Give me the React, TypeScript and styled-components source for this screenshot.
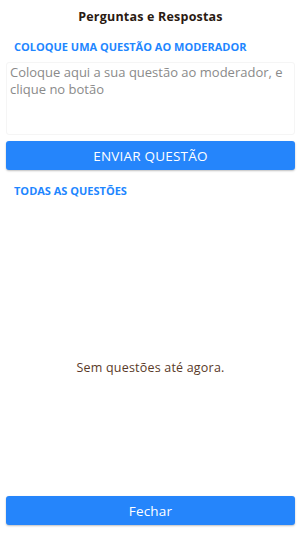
import React from 'react'
import styled, { createGlobalStyle } from 'styled-components'

const GlobalStyle = createGlobalStyle`
  html, body {
    margin: 0;
    padding: 0;
    background: #ffffff;
  }
  body {
    font-family: 'Open Sans', 'Noto Sans', sans-serif;
  }
`

export default function App(): React.ReactElement {
  return (
    <>
      <GlobalStyle />
      <Wrapper>
        <Title>Perguntas e Respostas</Title>
        <SectionLabel>COLOQUE UMA QUESTÃO AO MODERADOR</SectionLabel>
        <QuestionInput placeholder="Coloque aqui a sua questão ao moderador, e clique no botão" />
        <PrimaryButton $upper>ENVIAR QUESTÃO</PrimaryButton>
        <SectionLabel $tight>TODAS AS QUESTÕES</SectionLabel>
        <QuestionList>
          <Empty>Sem questões até agora.</Empty>
        </QuestionList>
        <PrimaryButton>Fechar</PrimaryButton>
      </Wrapper>
    </>
  )
}

const Wrapper = styled.div`
  display: flex;
  flex-direction: column;
  box-sizing: border-box;
  width: 300px;
  height: 533px;
  padding: 9px 5px 8px 6px;
`

const Title = styled.div`
  text-align: center;
  font-size: 12.5px;
  font-weight: 700;
  color: #2a1a12;
  line-height: 16px;
  letter-spacing: 0.2px;
`

const SectionLabel = styled.div<{ $tight?: boolean }>`
  margin: ${(p) => (p.$tight ? '14px' : '15px')} 0 8px 8px;
  font-size: 11px;
  font-weight: 700;
  color: #1e86ff;
  line-height: 14px;
  letter-spacing: 0;
`

const QuestionInput = styled.textarea`
  box-sizing: border-box;
  width: 100%;
  height: 73px;
  margin: 0;
  padding: 1px 3px;
  border: 1px solid #f5f5f5;
  border-radius: 3px;
  resize: none;
  outline: none;
  font-family: 'Open Sans', 'Noto Sans', sans-serif;
  font-size: 13px;
  line-height: 17px;
  color: #333;

  &::placeholder {
    color: #8a8a8a;
  }
`

const PrimaryButton = styled.button<{ $upper?: boolean }>`
  box-sizing: border-box;
  width: 100%;
  height: 29px;
  margin-top: ${(p) => (p.$upper ? '6px' : '0')};
  border: none;
  border-radius: 3px;
  background: #2585fb;
  box-shadow: 0 1px 2px rgba(0, 0, 0, 0.25);
  color: #ffffff;
  font-family: 'Open Sans', 'Noto Sans', sans-serif;
  font-size: 13.5px;
  font-weight: 400;
  letter-spacing: 0.2px;
`

const QuestionList = styled.div`
  flex: 1;
  display: flex;
  align-items: center;
  justify-content: center;
  padding-top: 32px;
`

const Empty = styled.div`
  font-size: 12.5px;
  color: #5a3a28;
  letter-spacing: 0.2px;
`
